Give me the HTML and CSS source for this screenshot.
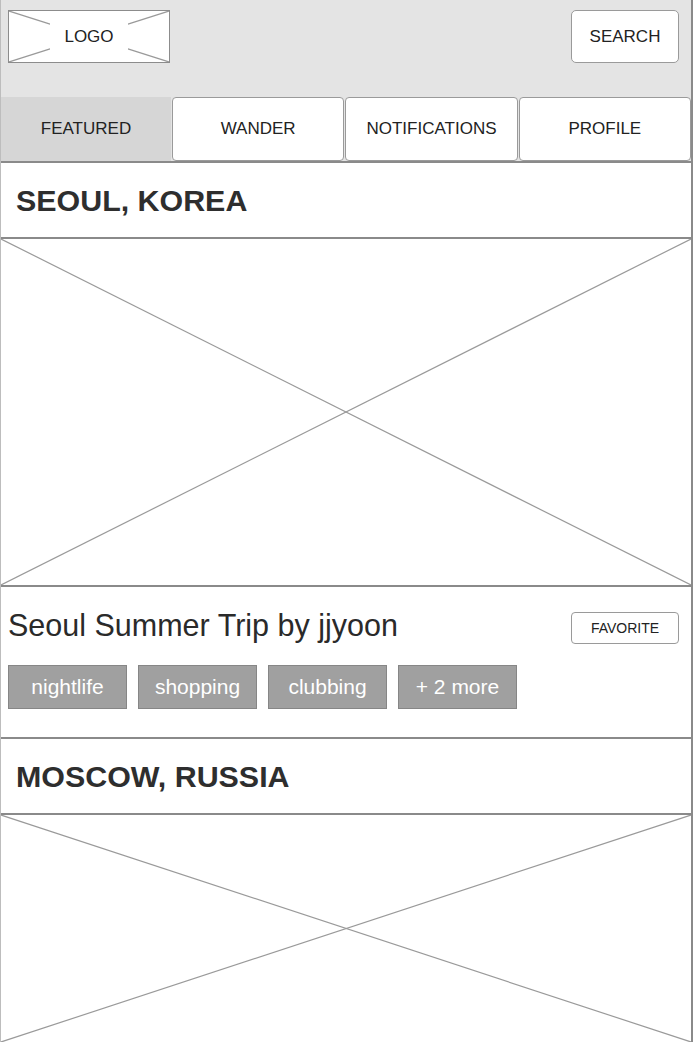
FILE: index.html
```html
<!DOCTYPE html>
<html lang="en">

<head>
  <meta charset="UTF-8" />
  <meta name="viewport" content="width=device-width, initial-scale=1.0" />
  <title>Featured trips</title>
  <link rel="stylesheet" href="styles.css">
</head>

<body>
  <div class="app">
    <div class="header">
      <div class="logo">
        <svg class="cross" viewBox="0 0 100 100" preserveAspectRatio="none">
          <line x1="0" y1="0" x2="100" y2="100" vector-effect="non-scaling-stroke" />
          <line x1="100" y1="0" x2="0" y2="100" vector-effect="non-scaling-stroke" />
        </svg>
        <span class="logo-label">LOGO</span>
      </div>
      <button class="search">SEARCH</button>
    </div>

    <div class="tabs">
      <div class="tab active">FEATURED</div>
      <div class="tab">WANDER</div>
      <div class="tab">NOTIFICATIONS</div>
      <div class="tab">PROFILE</div>
    </div>

    <!-- first trip -->
    <div class="city">SEOUL, KOREA</div>
    <div class="photo">
      <svg class="cross" viewBox="0 0 100 100" preserveAspectRatio="none">
        <line x1="0" y1="0" x2="100" y2="100" vector-effect="non-scaling-stroke" />
        <line x1="100" y1="0" x2="0" y2="100" vector-effect="non-scaling-stroke" />
      </svg>
    </div>
    <div class="info">
      <div class="info-row">
        <div class="trip-title">Seoul Summer Trip by jjyoon</div>
        <button class="favorite">FAVORITE</button>
      </div>
      <div class="tags">
        <span class="tag">nightlife</span>
        <span class="tag">shopping</span>
        <span class="tag">clubbing</span>
        <span class="tag">+ 2 more</span>
      </div>
    </div>

    <!-- second trip -->
    <div class="city">MOSCOW, RUSSIA</div>
    <div class="photo short">
      <svg class="cross" viewBox="0 0 100 100" preserveAspectRatio="none">
        <line x1="0" y1="0" x2="100" y2="100" vector-effect="non-scaling-stroke" />
        <line x1="100" y1="0" x2="0" y2="100" vector-effect="non-scaling-stroke" />
      </svg>
    </div>
  </div>
</body>

</html>
```

FILE: styles.css
```css
body {
  font-family: "Liberation Sans", Arial, sans-serif;
  background-color: #ffffff;
  color: #333333;
  margin: 0;
  padding: 0;
}

.app {
  width: 693px;
  box-sizing: border-box;
  border-left: 1px solid #bdbdbd;
  border-right: 2px solid #8a8a8a;
}

.header {
  height: 97px;
  box-sizing: border-box;
  background-color: #e4e4e4;
  padding: 10px 12px 0 7px;
  display: flex;
  justify-content: space-between;
  align-items: flex-start;
}

.logo {
  position: relative;
  width: 162px;
  height: 53px;
  box-sizing: border-box;
  background-color: #fff;
  border: 1px solid #8c8c8c;
  display: flex;
  align-items: center;
  justify-content: center;
}

.cross {
  position: absolute;
  top: 0;
  left: 0;
  width: 100%;
  height: 100%;
}

.cross line {
  stroke: #9a9a9a;
  stroke-width: 1.2;
}

.logo-label {
  position: relative;
  background-color: #fff;
  padding: 4px 14px;
  font-size: 17px;
  color: #222;
}

.search {
  width: 108px;
  height: 53px;
  background-color: #fff;
  border: 1px solid #9a9a9a;
  border-radius: 5px;
  font-family: inherit;
  font-size: 17px;
  color: #222;
  padding: 0;
}

.tabs {
  display: flex;
  gap: 1px;
  height: 66px;
  box-sizing: border-box;
  background-color: #e4e4e4;
  border-bottom: 2px solid #8a8a8a;
}

.tab {
  flex: 1;
  display: flex;
  align-items: center;
  justify-content: center;
  background-color: #fff;
  border: 1px solid #9a9a9a;
  border-radius: 4px;
  font-size: 17px;
  color: #222;
}

.tab.active {
  flex: 0 0 170px;
  background-color: #d6d6d6;
  border: none;
  border-radius: 0;
}

.city {
  height: 76px;
  box-sizing: border-box;
  display: flex;
  align-items: center;
  padding-left: 15px;
  border-bottom: 2px solid #8a8a8a;
  font-size: 30.4px;
  font-weight: bold;
  color: #2e2e2e;
}

.photo {
  position: relative;
  height: 348px;
  box-sizing: border-box;
  border-bottom: 2px solid #8a8a8a;
}

.photo.short {
  height: 229px;
}

.info {
  height: 152px;
  box-sizing: border-box;
  padding: 19px 12px 0 7px;
  border-bottom: 2px solid #8a8a8a;
}

.info-row {
  display: flex;
  justify-content: space-between;
  align-items: center;
}

.trip-title {
  font-size: 30.5px;
  line-height: 36px;
  color: #2a2a2a;
}

.favorite {
  width: 108px;
  height: 32px;
  margin-top: 6px;
  background-color: #fff;
  border: 1px solid #9a9a9a;
  border-radius: 4px;
  font-family: inherit;
  font-size: 14px;
  color: #222;
  padding: 0;
}

.tags {
  display: flex;
  gap: 11px;
  margin-top: 21px;
}

.tag {
  width: 119px;
  height: 44px;
  box-sizing: border-box;
  display: flex;
  align-items: center;
  justify-content: center;
  background-color: #a0a0a0;
  border: 1px solid #868686;
  color: #fff;
  font-size: 21px;
}
```
